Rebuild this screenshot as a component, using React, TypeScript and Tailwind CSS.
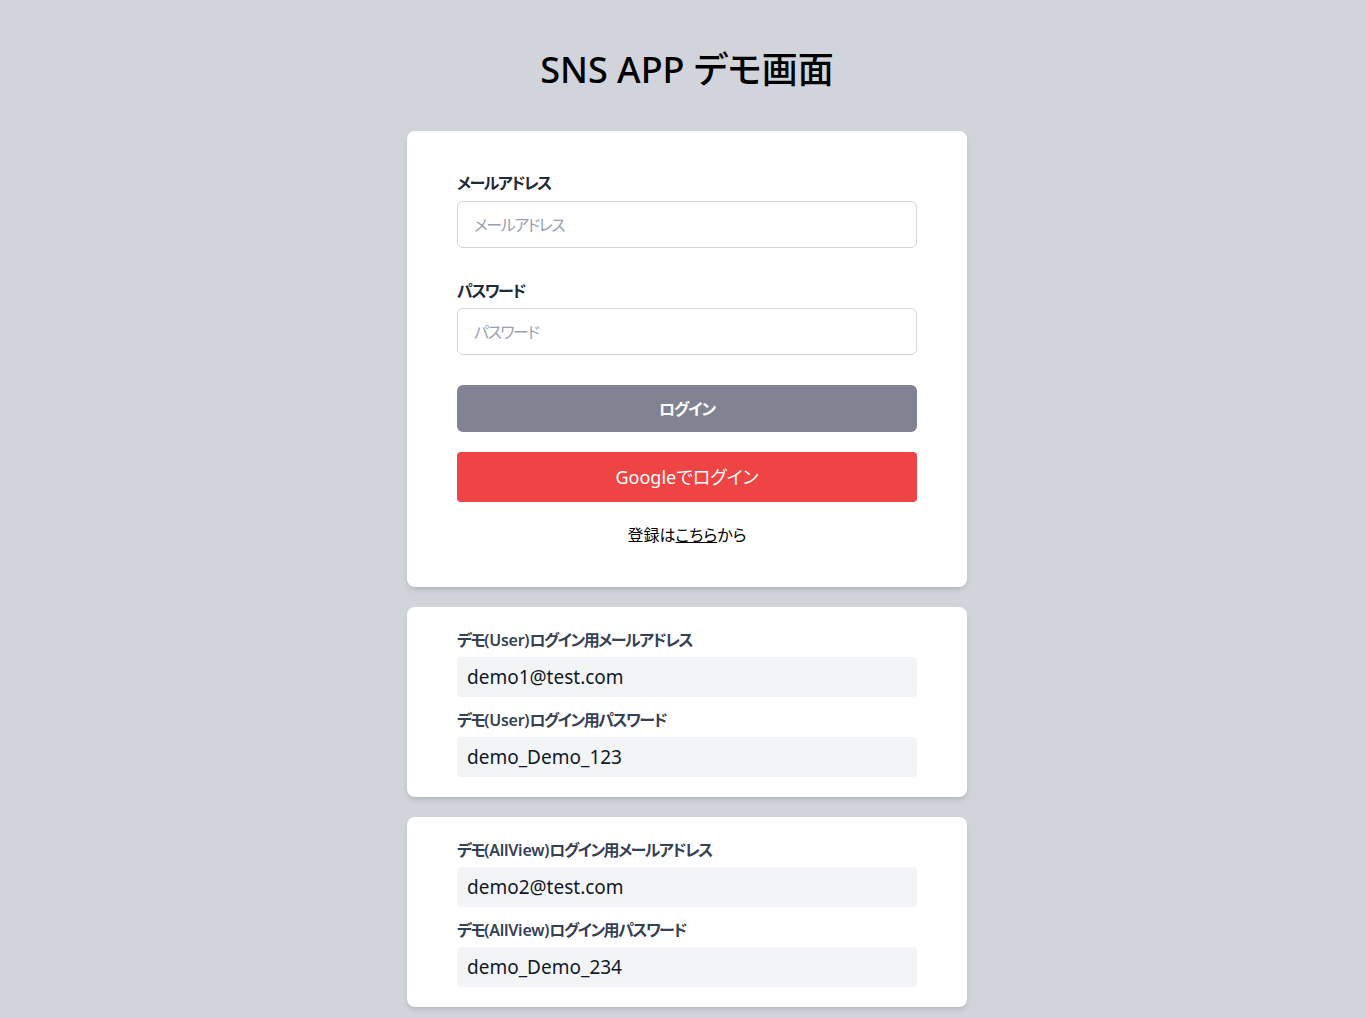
import React from "react"

const font = { fontFamily: '"Noto Sans", "Noto Sans CJK JP", sans-serif' }

function DemoCard({ label, email, password }: { label: string; email: string; password: string }) {
  return (
    <div className="bg-white rounded-lg shadow-md px-[50px] pt-[21px] pb-5">
      <p className="text-base leading-6 font-semibold text-gray-700 tracking-[-1.5px] mb-[5px]">
        デモ<span className="tracking-[-0.25px]">({label})</span>ログイン用メールアドレス
      </p>
      <div className="h-10 bg-gray-100 rounded px-2.5 flex items-center text-[19px] text-gray-900">{email}</div>
      <p className="text-base leading-6 font-semibold text-gray-700 tracking-[-1.5px] mt-[11px] mb-[5px]">
        デモ<span className="tracking-[-0.25px]">({label})</span>ログイン用パスワード
      </p>
      <div className="h-10 bg-gray-100 rounded px-2.5 flex items-center text-[19px] text-gray-900">{password}</div>
    </div>
  )
}

export default function App() {
  return (
    <div style={font} className="min-h-screen bg-[#d1d5db] pl-2 pb-10 [font-feature-settings:'palt']">
      <div className="w-[560px] mx-auto">
        <h1 className="pt-[50px] text-4xl leading-10 font-medium text-black text-center mb-[41px]">SNS APP デモ画面</h1>
        <form
          onSubmit={(e) => e.preventDefault()}
          className="bg-white rounded-lg shadow-md px-[50px] pt-10 pb-10"
        >
          <label htmlFor="email" className="block text-base leading-6 font-semibold text-gray-800 tracking-[-1.5px] mb-1.5">
            メールアドレス
          </label>
          <input
            id="email"
            type="email"
            placeholder="メールアドレス"
            className="w-full h-[47px] border border-gray-300 rounded-md px-4 text-base tracking-[-1.5px] placeholder:text-gray-400 outline-none"
          />
          <label htmlFor="password" className="block text-base leading-6 font-semibold text-gray-800 tracking-[-1.5px] mt-[31px] mb-[5px]">
            パスワード
          </label>
          <input
            id="password"
            type="password"
            placeholder="パスワード"
            className="w-full h-[47px] border border-gray-300 rounded-md px-4 text-base tracking-[-1.5px] placeholder:text-gray-400 outline-none"
          />
          <button type="submit" className="w-full h-[47px] mt-[30px] rounded-md bg-[#828392] text-white font-semibold text-base tracking-[-1px]">
            ログイン
          </button>
          <button type="button" className="w-full h-[50px] mt-5 rounded bg-[#ef4444] text-white text-lg">
            Googleでログイン
          </button>
          <p className="text-center text-base leading-6 text-black mt-[21px]">
            登録は<a href="#" className="underline">こちら</a>から
          </p>
        </form>
        <div className="mt-5 flex flex-col gap-5">
          <DemoCard label="User" email="demo1@test.com" password="demo_Demo_123" />
          <DemoCard label="AllView" email="demo2@test.com" password="demo_Demo_234" />
        </div>
      </div>
    </div>
  )
}
